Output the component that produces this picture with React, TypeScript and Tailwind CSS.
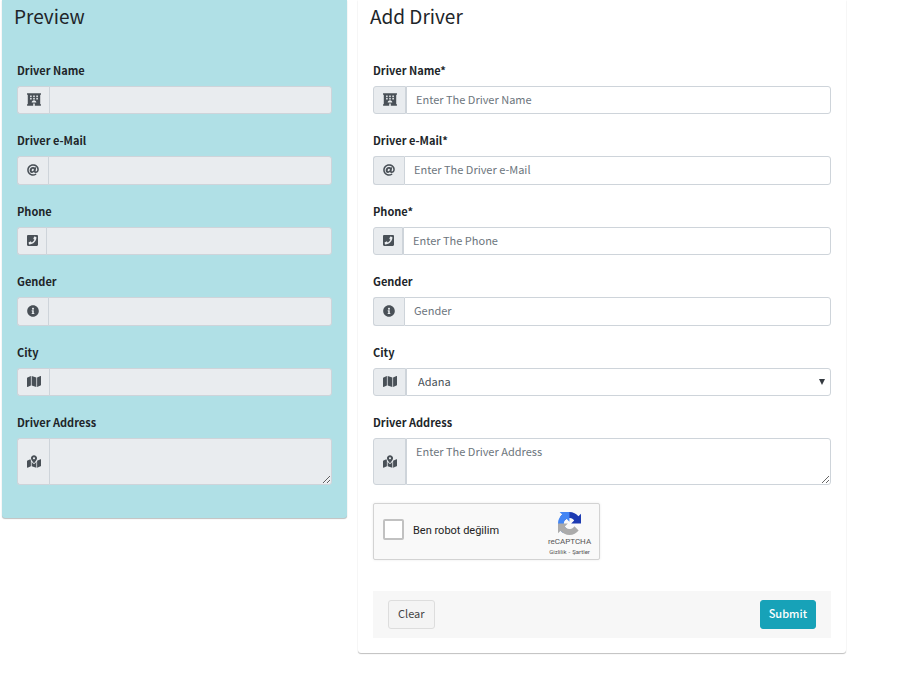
import type { ReactNode } from "react";
import { FaAt, FaHotel, FaInfoCircle, FaMap, FaMapMarkedAlt, FaPhoneSquare } from "react-icons/fa";

type Kind = "text" | "select" | "textarea";

interface Field {
  id: string;
  label: string;
  required?: boolean;
  placeholder: string;
  kind: Kind;
  icon: ReactNode;
  height: string;
  previewAddon: string;
  formAddon: string;
}

const fields: Field[] = [
  {
    id: "name",
    label: "Driver Name",
    required: true,
    placeholder: "Enter The Driver Name",
    kind: "text",
    icon: <FaHotel className="h-[13px] w-[14px]" />,
    height: "h-7",
    previewAddon: "w-8",
    formAddon: "w-[33px] border-r",
  },
  {
    id: "email",
    label: "Driver e-Mail",
    required: true,
    placeholder: "Enter The Driver e-Mail",
    kind: "text",
    icon: <FaAt className="size-3" />,
    height: "h-[29px]",
    previewAddon: "w-[31px]",
    formAddon: "w-[31px]",
  },
  {
    id: "phone",
    label: "Phone",
    required: true,
    placeholder: "Enter The Phone",
    kind: "text",
    icon: <FaPhoneSquare className="h-[13px] w-[11px]" />,
    height: "h-7",
    previewAddon: "w-[29px]",
    formAddon: "w-[30px] border-r",
  },
  {
    id: "gender",
    label: "Gender",
    placeholder: "Gender",
    kind: "text",
    icon: <FaInfoCircle className="size-3" />,
    height: "h-[29px]",
    previewAddon: "w-[31px]",
    formAddon: "w-[31px]",
  },
  {
    id: "city",
    label: "City",
    placeholder: "Adana",
    kind: "select",
    icon: <FaMap className="h-[13px] w-[14px]" />,
    height: "h-7",
    previewAddon: "w-8",
    formAddon: "w-[33px] border-r",
  },
  {
    id: "address",
    label: "Driver Address",
    placeholder: "Enter The Driver Address",
    kind: "textarea",
    icon: <FaMapMarkedAlt className="h-[13px] w-[14px]" />,
    height: "h-[47px]",
    previewAddon: "w-8",
    formAddon: "w-[33px] border-r",
  },
];

const control =
  "block h-full min-w-0 flex-1 rounded-r-[3px] border border-[#ced4da] px-[9px] text-[11px] leading-[18px] text-[#495057] placeholder:text-[#6c757d] outline-none";

function Row({ field, preview }: { field: Field; preview?: boolean }) {
  const id = (preview ? "preview-" : "form-") + field.id;
  return (
    <div>
      <label htmlFor={id} className="mb-2 block text-[11px] leading-4 font-bold text-[#212529]">
        {field.label}
        {!preview && field.required ? "*" : ""}
      </label>
      <div className={`flex ${field.height}`}>
        <span
          className={`flex shrink-0 items-center rounded-l-[3px] border-y border-l border-[#ced4da] bg-[#e9ecef] pb-px pl-[9px] text-[#495057] ${
            preview ? field.previewAddon : field.formAddon
          }`}
        >
          {field.icon}
        </span>
        {field.kind === "textarea" ? (
          <textarea
            id={id}
            readOnly={preview}
            placeholder={preview ? undefined : field.placeholder}
            className={`${control} resize py-[3px] ${preview ? "bg-[#e9ecef]" : "bg-white"}`}
          />
        ) : field.kind === "select" && !preview ? (
          <div className="relative min-w-0 flex-1">
            <select
              id={id}
              className="block size-full appearance-none rounded-r-[3px] border border-[#ced4da] bg-white pr-6 pb-0.5 pl-[11px] text-[11px] leading-[18px] text-[#495057] outline-none"
            >
              <option>{field.placeholder}</option>
            </select>
            <svg
              viewBox="0 0 6 6"
              className="pointer-events-none absolute top-[11px] right-[6px] size-1.5 fill-[#343a40]"
              aria-hidden="true"
            >
              <path d="M0 0H6L3 6Z" />
            </svg>
          </div>
        ) : (
          <input
            id={id}
            type="text"
            readOnly={preview}
            placeholder={preview ? undefined : field.placeholder}
            className={`${control} pb-[3px] ${preview ? "bg-[#e9ecef]" : "bg-white"}`}
          />
        )}
      </div>
    </div>
  );
}

function Captcha() {
  return (
    <div className="mt-[18px] flex h-[57px] w-[227px] rounded-[2px] border border-[#d3d3d3] bg-[#f9f9f9] font-[Roboto,sans-serif] shadow-[0_0_3px_rgba(0,0,0,0.08)]">
      <div className="flex flex-1 items-center pb-1 pl-[9px]">
        <input
          id="captcha"
          type="checkbox"
          className="size-[21px] appearance-none rounded-[2px] border-2 border-[#c1c1c1] bg-white"
        />
        <label htmlFor="captcha" className="pt-0.5 pl-[9px] text-[11px] leading-4 text-[#222]">
          Ben robot değilim
        </label>
      </div>
      <div className="flex w-[59px] flex-col items-center pt-2 text-[#555]">
        <svg viewBox="0 0 64 64" className="size-[23px] shrink-0" aria-hidden="true">
          <path
            fill="#1c3ab2"
            d="M64 31.955l-.033-1.37V4.687l-7.16 7.16C50.948 4.674 42.033.093 32.05.093c-10.4 0-19.622 4.96-25.458 12.64l11.736 11.86a15.55 15.55 0 0 1 4.754-5.334c2.05-1.6 4.952-2.906 8.968-2.906.485 0 .86.057 1.135.163 4.976.393 9.288 3.14 11.828 7.124l-8.307 8.307L64 31.953"
          />
          <path
            fill="#4285f4"
            d="M31.862.094l-1.37.033H4.594l7.16 7.16C4.58 13.147 0 22.06 0 32.046c0 10.4 4.96 19.622 12.64 25.458L24.5 45.768a15.55 15.55 0 0 1-5.334-4.754c-1.6-2.05-2.906-4.952-2.906-8.968 0-.485.057-.86.163-1.135.393-4.976 3.14-9.288 7.124-11.828l8.307 8.307L31.86.095"
          />
          <path
            fill="#ababab"
            d="M.001 32.045l.033 1.37v25.898l7.16-7.16c5.86 7.173 14.774 11.754 24.76 11.754 10.4 0 19.622-4.96 25.458-12.64l-11.736-11.86a15.55 15.55 0 0 1-4.754 5.334c-2.05 1.6-4.952 2.906-8.968 2.906-.485 0-.86-.057-1.135-.163-4.976-.393-9.288-3.14-11.828-7.124l8.307-8.307c-10.522.04-22.4.066-27.295-.005"
          />
        </svg>
        <span className="mt-0.5 text-[8px] leading-[10px]">reCAPTCHA</span>
        <span className="flex gap-0.5 text-[6px] leading-[9px]">
          <a href="#privacy">Gizlilik</a>
          <span>-</span>
          <a href="#terms">Şartler</a>
        </span>
      </div>
    </div>
  );
}

const card = "min-w-0 rounded-b-[3px] shadow-[0_0_1px_rgba(0,0,0,0.13),0_1px_1px_rgba(0,0,0,0.24)]";
const title = "px-3 pt-1 pb-px text-[19px] leading-6 text-[#212529]";

export default function App() {
  return (
    <main className="grid grid-cols-[minmax(0,345fr)_minmax(0,488fr)] items-start gap-[11px] bg-white pr-[54px] pb-8 pl-0.5 font-['Noto_Sans_CJK_SC',sans-serif]">
      <section className={`${card} bg-[#b0e0e6]`}>
        <h2 className={title}>Preview</h2>
        <div className="flex flex-col gap-[18px] px-[15px] pt-[33px] pb-[33px]">
          {fields.map((f) => (
            <Row key={f.id} field={f} preview />
          ))}
        </div>
      </section>
      <section className={`${card} bg-white`}>
        <h2 className={title}>Add Driver</h2>
        <form className="px-[15px] pt-[33px] pb-[15px]" onSubmit={(e) => e.preventDefault()}>
          <div className="flex flex-col gap-[18px]">
            {fields.map((f) => (
              <Row key={f.id} field={f} />
            ))}
          </div>
          <Captcha />
          <div className="mt-[31px] flex items-center justify-between bg-[#f7f7f7] px-[15px] py-[9px]">
            <button
              type="reset"
              className="h-[29px] rounded-[3px] border border-[#ddd] bg-[#f4f4f4] px-[9px] pb-[3px] text-[11px] leading-[18px] text-[#444]"
            >
              Clear
            </button>
            <button
              type="submit"
              className="h-[29px] rounded-[3px] border border-[#17a2b8] bg-[#17a2b8] px-2 pb-[3px] text-[11px] leading-[18px] font-medium text-white"
            >
              Submit
            </button>
          </div>
        </form>
      </section>
    </main>
  );
}
